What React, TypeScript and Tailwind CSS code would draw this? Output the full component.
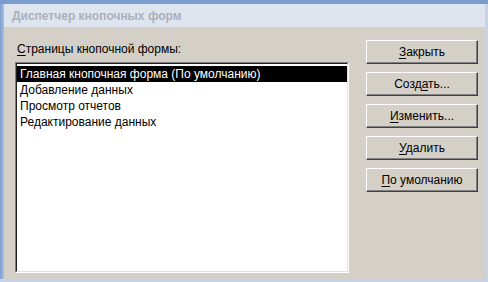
import React from 'react'

const rows = [
  'Главная кнопочная форма (По умолчанию)',
  'Добавление данных',
  'Просмотр отчетов',
  'Редактирование данных',
]

function Btn({ u, rest, pre }: { u: string; rest: string; pre?: string }) {
  return (
    <button className="h-[24px] w-[112px] border border-t-white border-l-white border-b-[#404040] border-r-[#404040] bg-[#d4d0c8] text-[12px] leading-none text-black shadow-[inset_-1px_-1px_0_#808080]">
      {pre}
      <span className="underline underline-offset-2">{u}</span>
      {rest}
    </button>
  )
}

export default function App() {
  return (
    <div
      className="flex h-[282px] w-[488px] flex-col overflow-hidden bg-[#7b9ccb]"
      style={{ fontFamily: '"Liberation Sans", Tahoma, sans-serif' }}
    >
      <div className="h-[4px] bg-[#7b9dcd]" />
      <div className="flex flex-1">
        <div className="w-[4px] bg-gradient-to-r from-[#7c9dcc] to-[#a9bfdf]" />
        <div className="flex flex-1 flex-col">
          {/* title bar */}
          <div className="flex h-[23px] items-center bg-[#dfe5ee] pl-[8px] text-[12px] font-bold text-[#a9b0bc]">
            Диспетчер кнопочных форм
          </div>
          {/* body */}
          <div className="flex flex-1 bg-[#d4d0c8] pb-[6px] pl-[11px] pr-[7px] pt-[11px]">
            <div className="flex w-[334px] flex-col">
              <div className="h-[24px] pl-[2px] pt-[3px] text-[12px] leading-[16px] text-black">
                <span className="underline underline-offset-2">С</span>траницы кнопочной формы:
              </div>
              <div className="flex-1 border border-t-[#808080] border-l-[#808080] border-b-white border-r-white">
                <div className="h-full border border-t-[#202020] border-l-[#202020] border-b-[#e4e2dc] border-r-[#e4e2dc] bg-white pt-[2px]">
                  {rows.map((r, i) => (
                    <div
                      key={r}
                      className={
                        i === 0
                          ? 'h-[16px] bg-black pl-[3px] text-[12px] leading-[16px] text-white'
                          : 'h-[16px] pl-[3px] text-[12px] leading-[16px] text-black'
                      }
                    >
                      {r}
                    </div>
                  ))}
                </div>
              </div>
            </div>
            <div className="ml-auto flex flex-col gap-[8px] pt-[2px]">
              <Btn u="З" rest="акрыть" />
              <Btn pre="Созд" u="а" rest="ть..." />
              <Btn u="И" rest="зменить..." />
              <Btn u="У" rest="далить" />
              <Btn u="П" rest="о умолчанию" />
            </div>
          </div>
        </div>
        <div className="w-[3px] bg-[#c9d3e3]" />
      </div>
      <div className="h-[3px] bg-[#c6d2e6]" />
    </div>
  )
}
